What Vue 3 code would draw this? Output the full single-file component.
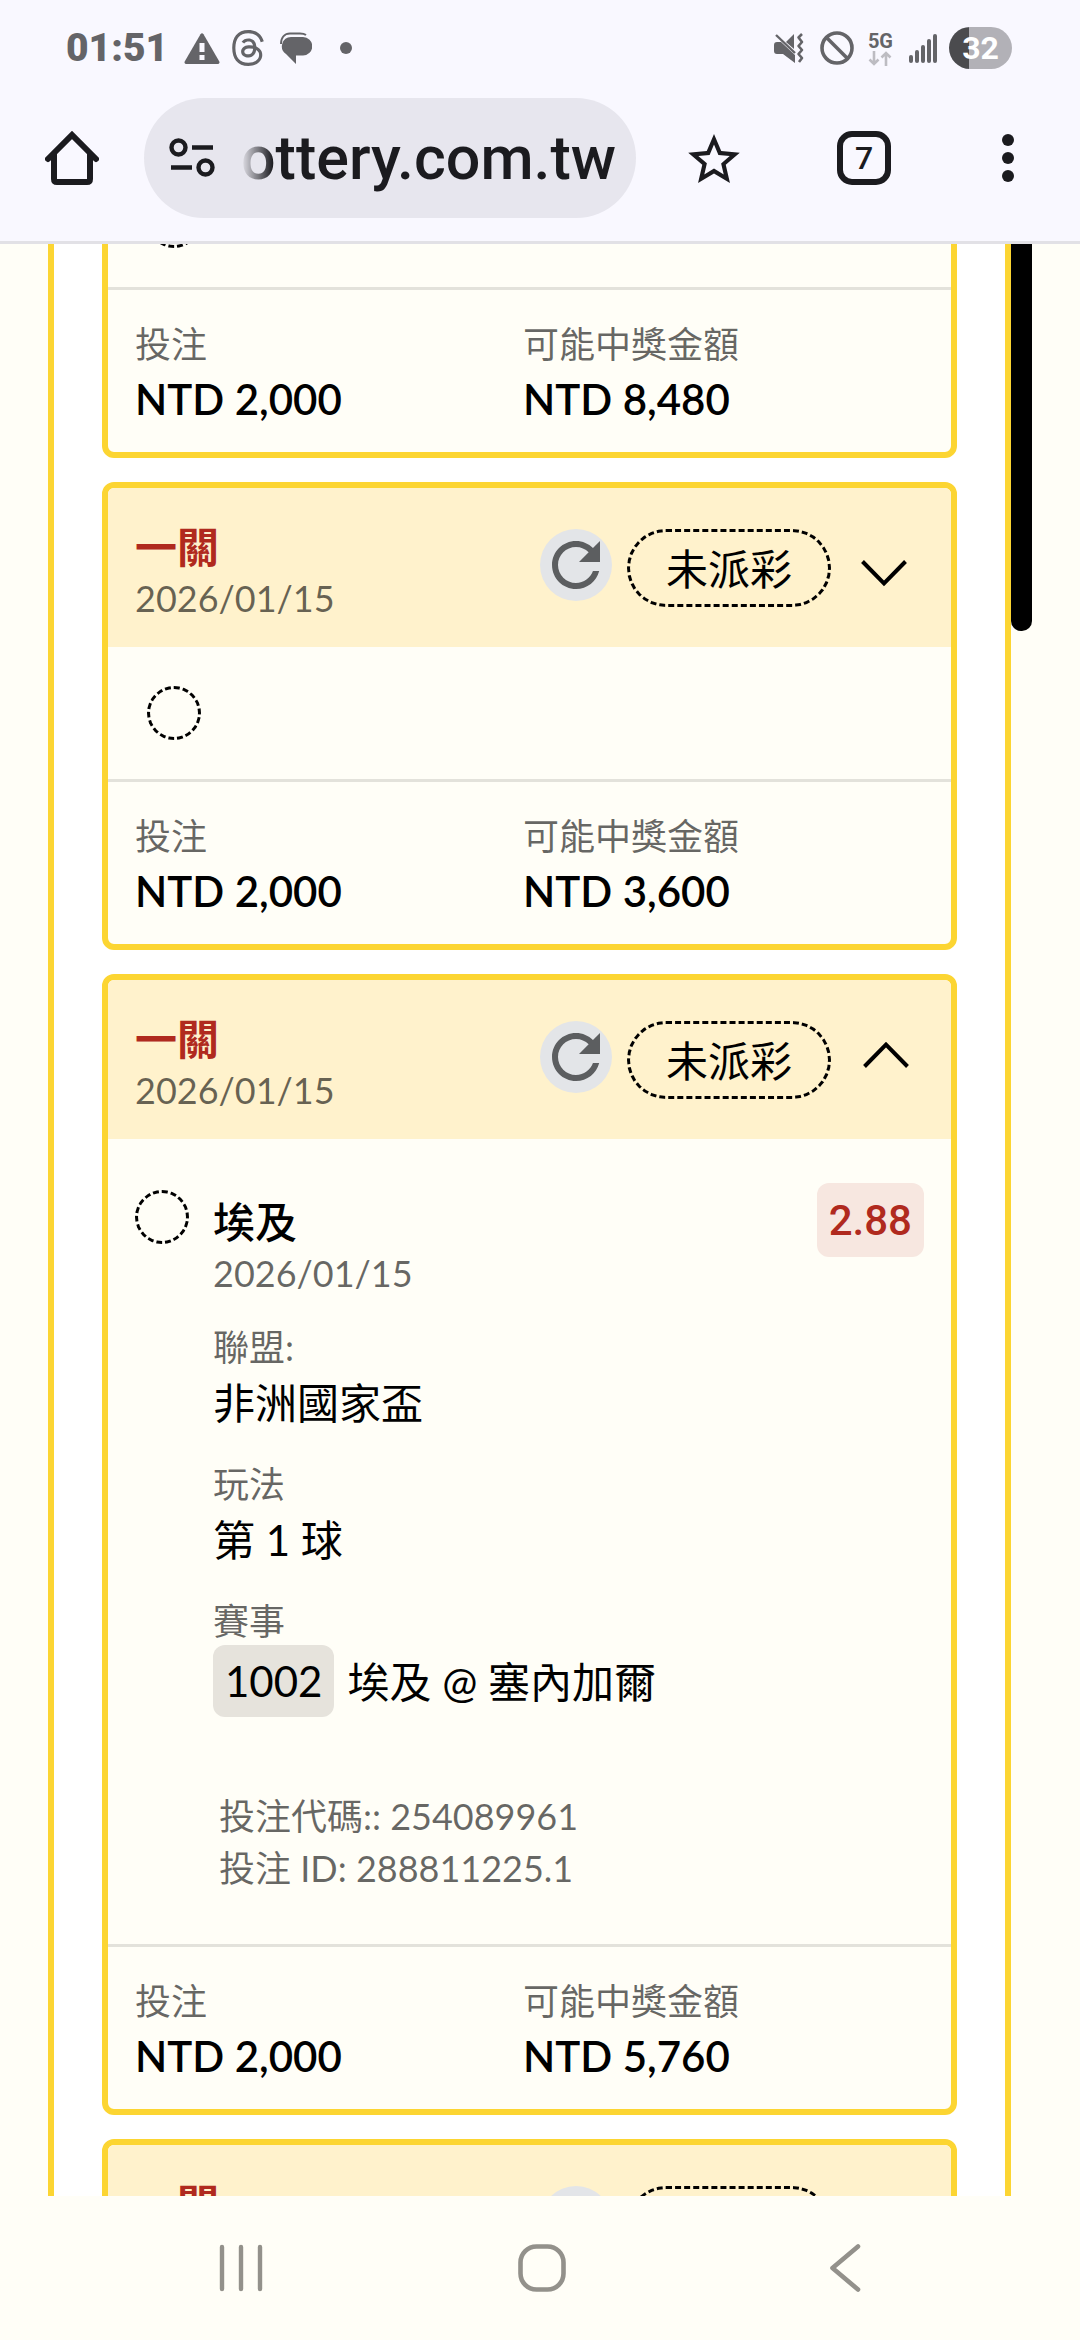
<script setup>
import { ref } from 'vue'

const address = ref('ottery.com.tw')

const bets = ref([
  { id: 1, header: false, open: false, body: true, stake: 'NTD 2,000', payout: 'NTD 8,480' },
  { id: 2, header: true, open: false, body: true, stake: 'NTD 2,000', payout: 'NTD 3,600' },
  { id: 3, header: true, open: true, body: true, stake: 'NTD 2,000', payout: 'NTD 5,760' },
  { id: 4, header: true, open: false, body: false },
])

const signalBars = [8, 13, 18, 24, 29]
</script>

<template>
  <div class="screen">
    <header class="chrome">
      <div class="status">
        <div class="status-left">
          <span class="clock">01:51</span>
          <svg class="warn" viewBox="0 0 36 31" width="36" height="31">
            <path d="M16.500 1.200Q18 -.8 19.500 1.200L35.300 28.500Q36 31 33.500 31H2.500Q0 31 .7 28.500Z" fill="#646468" />
            <path d="M15.500 10h5v9h-5zM15.500 22h5v5h-5z" fill="#f9f8ff" />
          </svg>
          <svg class="threads" viewBox="1.400 0 21.200 24" width="32" height="36">
            <path fill="#646468" d="M12.186 24h-.007c-3.581-.024-6.334-1.205-8.184-3.509C2.35 18.44 1.5 15.586 1.472 12.01v-.017c.03-3.579.879-6.43 2.525-8.482C5.845 1.205 8.6.024 12.18 0h.014c2.746.02 5.043.725 6.826 2.098 1.677 1.29 2.858 3.13 3.509 5.467l-2.04.569c-1.104-3.96-3.898-5.984-8.304-6.015-2.91.022-5.11.936-6.54 2.717C4.307 6.504 3.616 8.914 3.589 12c.027 3.086.718 5.496 2.057 7.164 1.43 1.783 3.631 2.698 6.54 2.717 2.623-.02 4.358-.631 5.8-2.045 1.647-1.613 1.618-3.593 1.09-4.798-.31-.71-.873-1.3-1.634-1.75-.192 1.352-.622 2.446-1.284 3.272-.886 1.102-2.14 1.704-3.73 1.79-1.202.065-2.361-.218-3.259-.801-1.063-.689-1.685-1.74-1.752-2.964-.065-1.19.408-2.285 1.33-3.082.88-.76 2.119-1.207 3.583-1.291a13.853 13.853 0 0 1 3.02.142c-.126-.742-.375-1.332-.75-1.757-.513-.586-1.308-.883-2.359-.89h-.029c-.844 0-1.992.232-2.721 1.32L7.734 7.847c.98-1.454 2.568-2.256 4.478-2.256h.044c3.194.02 5.097 1.975 5.287 5.388.108.046.216.094.321.142 1.49.7 2.58 1.761 3.154 3.07.797 1.82.871 4.79-1.548 7.158-1.85 1.81-4.094 2.628-7.277 2.65Zm1.003-11.69c-.242 0-.487.007-.739.021-1.836.103-2.98.946-2.916 2.143.067 1.256 1.452 1.839 2.784 1.767 1.224-.065 2.818-.543 3.086-3.71a10.5 10.5 0 0 0-2.215-.221z" />
          </svg>
          <svg class="chat" viewBox="0 0 32 32" width="32" height="32">
            <path d="M11 5H23A9 9 0 0 1 23 23.500H16V32L6 22A9.300 9.300 0 0 1 11 5Z" fill="#646468" />
            <path d="M1 12C1 5 5 1.500 10 1.500H20Q24 1.500 26 3" fill="none" stroke="#646468" stroke-width="2" />
          </svg>
          <span class="dot"></span>
        </div>
        <div class="status-right">
          <svg viewBox="0 0 30 30" width="30" height="30">
            <path d="M0 12Q0 9 3 9H7L21 22V30L9 21H3Q0 21 0 18Z" fill="#646468" />
            <path d="M20 1V16L12 9Z" fill="#646468" />
            <path d="M2 2L21 20" stroke="#646468" stroke-width="2.400" />
            <path d="M28 1L24.500 4.500L28 9L24.500 13L28 17L24.500 21L28 25L25 29" fill="none" stroke="#646468" stroke-width="2.600" stroke-linejoin="round" />
          </svg>
          <svg class="block" viewBox="0 0 34 34" width="34" height="34">
            <g fill="none" stroke="#646468" stroke-width="3.600">
              <circle cx="17" cy="17" r="15" />
              <path d="M6.500 6.500L27.500 27.500" />
            </g>
          </svg>
          <span class="net">
            <span class="net-label">5G</span>
            <svg viewBox="0 0 24 15" width="24" height="15">
              <path d="M6 0V13M1.500 8.500L6 13L10.500 8.500M18 15V2M13.500 6.500L18 2L22.500 6.500" fill="none" stroke="#bdbcc2" stroke-width="2.600" />
            </svg>
          </span>
          <span class="signal"><i v-for="h in signalBars" :key="h" :style="{ height: h + 'px' }"></i></span>
          <span class="battery">32</span>
        </div>
      </div>

      <div class="toolbar">
        <button class="icon-btn home" aria-label="首頁">
          <svg viewBox="0 0 54 54" width="54" height="54">
            <path d="M3 28L27 4L51 28M9 23V48Q9 51 12 51H42Q45 51 45 48V23" fill="none" stroke="#1b1b1f" stroke-width="6" stroke-linecap="round" stroke-linejoin="miter" />
          </svg>
        </button>
        <label class="omnibox">
          <svg viewBox="0 0 46 40" width="46" height="40">
            <g fill="none" stroke="#1b1b1f" stroke-width="4.400">
              <circle cx="9.500" cy="9.500" r="7" />
              <circle cx="36.500" cy="29.500" r="7" />
              <path d="M23 9.500H44M2 29.500H23" />
            </g>
          </svg>
          <input v-model="address" type="text" aria-label="網址" />
        </label>
        <button class="icon-btn star" aria-label="加入書籤">
          <svg viewBox="2 2 20 19" width="52" height="49">
            <path fill="#1b1b1f" d="M22 9.240l-7.190-.620L12 2 9.190 8.630 2 9.240l5.460 4.730L5.820 21 12 17.270 18.180 21l-1.630-7.030L22 9.240zM12 15.400l-3.760 2.270 1-4.280-3.320-2.880 4.380-.380L12 6.100l1.710 4.040 4.380.380-3.320 2.880 1 4.280L12 15.400z" />
          </svg>
        </button>
        <button class="tabs">7</button>
        <button class="icon-btn" aria-label="選單">
          <svg viewBox="0 0 12 48" width="12" height="48">
            <g fill="#1b1b1f">
              <circle cx="6" cy="6" r="6" />
              <circle cx="6" cy="24" r="6" />
              <circle cx="6" cy="42" r="6" />
            </g>
          </svg>
        </button>
      </div>
    </header>

    <main class="page">
      <section class="panel">
        <article v-for="bet in bets" :key="bet.id" class="card">
          <div v-if="bet.header" class="card-head">
            <div>
              <h2>一關</h2>
              <p class="muted">2026/01/15</p>
            </div>
            <div class="actions">
              <button class="refresh" aria-label="重新整理">
                <svg viewBox="0 0 24 24" width="72" height="72">
                  <path fill="#5c5e60" d="M17.650 6.350C16.200 4.900 14.210 4 12 4c-4.420 0-7.990 3.580-7.990 8s3.570 8 7.990 8c3.730 0 6.840-2.550 7.730-6h-2.080c-.820 2.330-3.040 4-5.650 4-3.310 0-6-2.690-6-6s2.690-6 6-6c1.660 0 3.140.690 4.220 1.780L13 11h7V4l-2.350 2.350z" />
                </svg>
              </button>
              <span class="pill">未派彩</span>
              <button class="toggle" :class="{ open: bet.open }" aria-label="展開" @click="bet.open = !bet.open">
                <svg viewBox="0 0 60 60" width="60" height="60">
                  <path d="M7.500 23.500L29 45.500L50.500 23.500" fill="none" stroke="#000" stroke-width="4" />
                </svg>
              </button>
            </div>
          </div>

          <div v-if="bet.open" class="detail">
            <span class="ring"></span>
            <div class="info">
              <h3>埃及</h3>
              <p class="muted">2026/01/15</p>
              <dl>
                <div>
                  <dt>聯盟:</dt>
                  <dd>非洲國家盃</dd>
                </div>
                <div>
                  <dt>玩法</dt>
                  <dd>第 1 球</dd>
                </div>
                <div>
                  <dt>賽事</dt>
                  <dd class="match"><span class="code">1002</span>埃及 @ 塞內加爾</dd>
                </div>
              </dl>
              <div class="ids">
                <p>投注代碼:: 254089961</p>
                <p>投注 ID: 288811225.1</p>
              </div>
            </div>
            <span class="odds">2.88</span>
          </div>
          <div v-else-if="bet.body" class="brief"><span class="ring"></span></div>

          <dl v-if="bet.stake" class="totals">
            <div>
              <dt>投注</dt>
              <dd>{{ bet.stake }}</dd>
            </div>
            <div>
              <dt>可能中獎金額</dt>
              <dd>{{ bet.payout }}</dd>
            </div>
          </dl>
        </article>
      </section>
      <span class="thumb"></span>
    </main>

    <nav class="nav">
      <button class="icon-btn" aria-label="最近使用">
        <svg viewBox="0 0 48 48" width="48" height="48">
          <path d="M4 3V45M23 3V45M42 3V45" stroke="#93918b" stroke-width="4.400" stroke-linecap="round" />
        </svg>
      </button>
      <button class="icon-btn" aria-label="主畫面">
        <svg viewBox="0 0 48 48" width="48" height="48">
          <rect x="2.500" y="2.500" width="43" height="43" rx="16" fill="none" stroke="#93918b" stroke-width="4.600" />
        </svg>
      </button>
      <button class="icon-btn" aria-label="返回">
        <svg viewBox="0 0 48 48" width="48" height="48">
          <path d="M40 2.500L14.500 24L40 45.500" fill="none" stroke="#93918b" stroke-width="4.600" stroke-linecap="round" stroke-linejoin="round" />
        </svg>
      </button>
    </nav>
  </div>
</template>

<style>
body {
  margin: 0;
  background: #fffef7;
}
</style>

<style scoped>
.screen {
  display: flex;
  flex-direction: column;
  height: 100vh;
  overflow: hidden;
  background: #fffef7;
  color: #000;
  font-family: Lato, "Noto Sans CJK TC", sans-serif;
}

h2,
h3,
p,
dl,
dd {
  margin: 0;
}

svg {
  display: block;
}

button {
  padding: 0;
  border: 0;
  background: none;
  color: inherit;
}

.icon-btn {
  flex: none;
}

/* browser chrome */
.chrome {
  flex: none;
  border-bottom: 3px solid #e2e1e6;
  background: #f9f8ff;
}

.status {
  display: flex;
  align-items: center;
  justify-content: space-between;
  height: 96px;
  padding: 0 68px 0 66px;
  color: #646468;
  font-family: Roboto, sans-serif;
}

.status-left,
.status-right {
  display: flex;
  align-items: center;
}

.clock {
  font-size: 39px;
  line-height: 48px;
  font-weight: 900;
}

.warn {
  margin-left: 16px;
}

.threads {
  margin-left: 12px;
}

.chat {
  margin: 0 28px 0 16px;
}

.dot {
  width: 12px;
  height: 12px;
  border-radius: 50%;
  background: #646468;
}

.block {
  margin-left: 16px;
}

.net {
  display: flex;
  flex-direction: column;
  align-items: center;
  margin: 0 16px 0 14px;
}

.net-label {
  font-size: 20px;
  line-height: 20px;
  font-weight: 700;
}

.signal {
  display: flex;
  align-items: flex-end;
  gap: 2px;
  margin-right: 12px;
}

.signal i {
  width: 4px;
  border-radius: 2px;
  background: #646468;
}

.battery {
  width: 63px;
  height: 42px;
  border-radius: 21px;
  background: linear-gradient(90deg, #4b4b4e 32%, #b2b1b7 32%);
  color: #fff;
  font-size: 32px;
  line-height: 42px;
  font-weight: 700;
  text-align: center;
}

.toolbar {
  display: flex;
  align-items: center;
  padding: 2px 66px 23px 45px;
}

.omnibox {
  display: flex;
  flex: 1;
  align-items: center;
  gap: 26px;
  min-width: 0;
  height: 120px;
  box-sizing: border-box;
  margin: 0 52px 0 45px;
  padding: 0 12px 0 25px;
  border-radius: 60px;
  background: #e7e6ee;
}

.omnibox svg {
  flex: none;
}

.omnibox input {
  flex: 1;
  min-width: 0;
  padding: 0;
  border: 0;
  outline: 0;
  background: none;
  color: #1b1b1f;
  font-family: Roboto, sans-serif;
  font-size: 61px;
  font-weight: 500;
  mask-image: linear-gradient(90deg, transparent, #000 32px);
}

.tabs {
  flex: none;
  width: 54px;
  height: 54px;
  margin: 0 111px 0 97px;
  border: 6px solid #1b1b1f;
  border-radius: 15px;
  color: #1b1b1f;
  font: 500 32px/42px Roboto, sans-serif;
}

/* bet list */
.page {
  display: flex;
  flex: 1;
  align-items: flex-start;
  min-height: 0;
  overflow: hidden;
  padding: 0 48px;
}

.panel {
  display: flex;
  flex: 1;
  flex-direction: column;
  gap: 24px;
  margin-top: -95px;
  padding: 0 48px;
  border: solid #fcd532;
  border-width: 0 6px;
  background: #fff;
}

.thumb {
  flex: none;
  width: 21px;
  height: 387px;
  border-radius: 0 0 10px 10px;
  background: #000;
}

.card {
  overflow: hidden;
  border: 6px solid #fcd532;
  border-radius: 12px;
  background: #fffef7;
}

.card-head {
  display: flex;
  align-items: flex-start;
  justify-content: space-between;
  padding: 32px 36px 25px 27px;
  background: #fff2cc;
}

h2,
h3 {
  font-size: 42px;
  line-height: 54px;
}

h2 {
  color: #b02a1e;
  font-weight: 700;
}

h3 {
  font-weight: 500;
}

.muted,
dt,
.ids {
  color: rgba(0, 0, 0, 0.6);
  font-size: 36px;
  line-height: 48px;
}

.actions {
  display: flex;
  align-items: flex-start;
  padding-top: 9px;
}

.refresh {
  width: 72px;
  height: 72px;
  border-radius: 50%;
  background: #e3e5e8;
}

.pill {
  box-sizing: border-box;
  height: 78px;
  margin: 0 24px 0 15px;
  padding: 0 36px;
  border: 3px dashed #000;
  border-radius: 39px;
  font-size: 42px;
  line-height: 74px;
}

.toggle {
  display: flex;
  align-items: center;
  height: 78px;
}

.toggle.open {
  transform: rotate(180deg);
}

.ring {
  flex: none;
  box-sizing: border-box;
  width: 54px;
  height: 54px;
  border: 3px dashed #000;
  border-radius: 50%;
}

.brief {
  display: flex;
  padding: 39px;
}

.detail {
  display: flex;
  align-items: flex-start;
  padding: 44px 27px 50px;
}

.detail .ring {
  margin-top: 7px;
}

.info {
  flex: 1;
  margin-left: 24px;
  padding-top: 12px;
}

.info dl {
  display: flex;
  flex-direction: column;
  gap: 25px;
  padding-top: 26px;
}

.info dd {
  font-size: 42px;
  line-height: 64px;
}

.info .match {
  display: flex;
  gap: 13px;
  line-height: 74px;
}

.code {
  height: 72px;
  padding: 0 12px;
  border-radius: 12px;
  background: #e6e3dc;
  line-height: 72px;
}

.ids {
  margin-top: 71px;
  padding-left: 6px;
  line-height: 52px;
}

.odds {
  height: 74px;
  padding: 0 12px;
  border-radius: 12px;
  background: #f7e7e0;
  color: #b02a1e;
  font: 500 42px/76px Roboto, sans-serif;
}

.totals {
  display: grid;
  grid-template-columns: 1fr 1fr;
  padding: 30px 40px 21px 27px;
  border-top: 3px solid #e3e2db;
}

.totals dd {
  font-size: 42px;
  line-height: 63px;
  font-weight: 600;
}

/* system navigation */
.nav {
  display: flex;
  flex: none;
  align-items: center;
  justify-content: space-around;
  height: 144px;
  padding: 0 88px 0 92px;
  background: #fffef7;
}
</style>
